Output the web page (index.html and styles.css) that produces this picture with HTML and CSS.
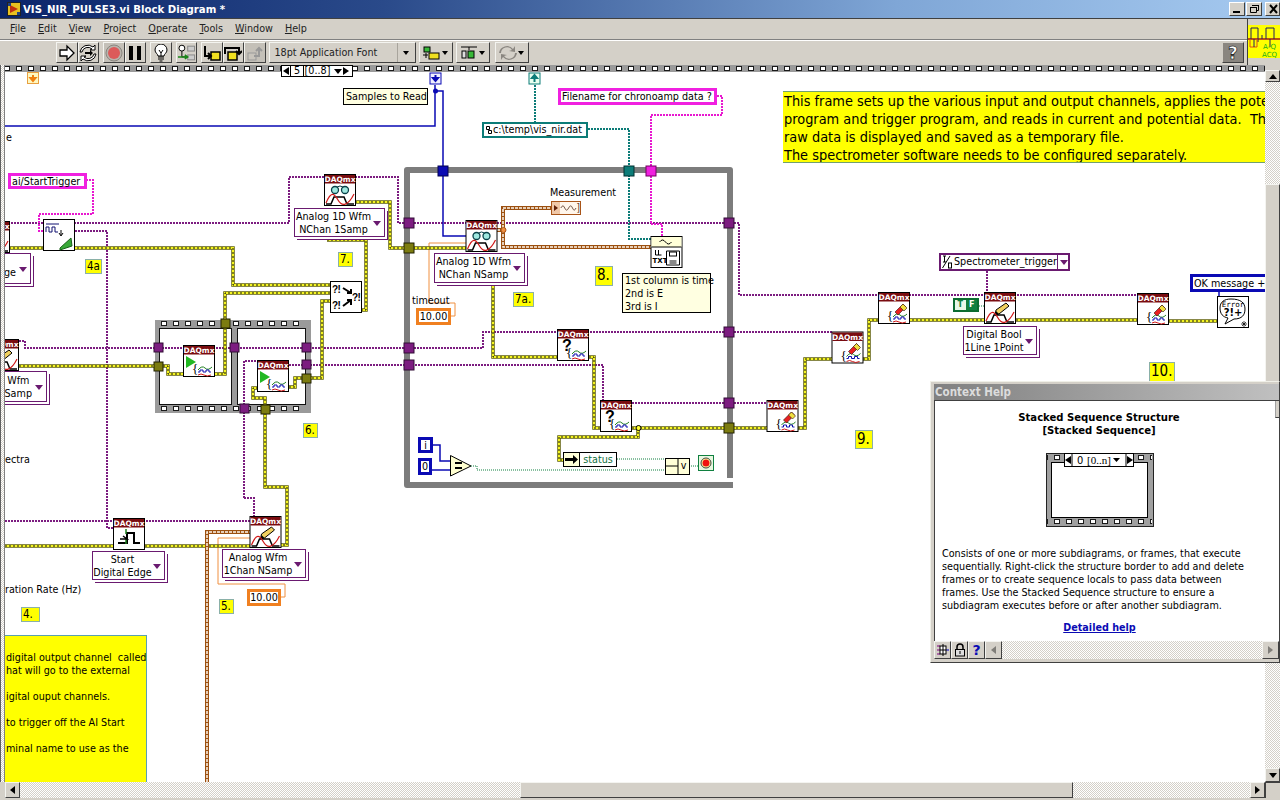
FILE: index.html
```html
<!DOCTYPE html>
<html lang="en">
<head>
<meta charset="utf-8">
<title>VIS_NIR_PULSE3.vi Block Diagram *</title>
<link rel="stylesheet" href="styles.css">
</head>
<body>
<div class="window">
  <header class="titlebar">
    <svg class="title-icon" width="14" height="14" viewBox="0 0 14 14"><rect width="14" height="14" fill="#222"/><rect x="1" y="1" width="12" height="12" fill="#e8c020"/><path d="M3 3l8 4-8 4z" fill="#c03010"/><path d="M1 1h3v3H1zM10 10h3v3h-3z" fill="#204080"/></svg>
    <span class="title-text">VIS_NIR_PULSE3.vi Block Diagram *</span>
    <div class="title-buttons">
      <span class="tbtn"><svg width="15" height="12"><rect x="3" y="8" width="7" height="2" fill="#000"/></svg></span>
      <span class="tbtn"><svg width="15" height="12"><path d="M5.5 2.5h6v5h-2M3.5 4.5h6v5h-6z" fill="none" stroke="#000"/><path d="M5 2h7v1H5zM3 4h7v1H3z" fill="#000"/></svg></span>
      <span class="tbtn tbtn-close"><svg width="15" height="12"><path d="M4 2l7 8M11 2l-7 8" stroke="#000" stroke-width="2"/></svg></span>
    </div>
  </header>

  <div class="chrome">
    <div class="chrome-main">
      <nav class="menubar">
        <span class="menu-item"><u>F</u>ile</span>
        <span class="menu-item"><u>E</u>dit</span>
        <span class="menu-item"><u>V</u>iew</span>
        <span class="menu-item"><u>P</u>roject</span>
        <span class="menu-item"><u>O</u>perate</span>
        <span class="menu-item"><u>T</u>ools</span>
        <span class="menu-item"><u>W</u>indow</span>
        <span class="menu-item"><u>H</u>elp</span>
      </nav>
      <div class="toolbar">
        <div class="tool-group group-run">
          <button class="tool"><svg width="18" height="18" viewBox="0 0 18 18"><path d="M2 6h7V2l7 7-7 7v-4H2z" fill="#fff" stroke="#000" stroke-width="1.3"/></svg></button>
          <button class="tool"><svg width="18" height="18" viewBox="0 0 18 18"><path d="M3 8a6 6 0 0 1 10-3l-2 1h5V1l-2 2A8 8 0 0 0 1 8zM15 10a6 6 0 0 1-10 3l2-1H2v5l2-2a8 8 0 0 0 13-5z" fill="#fff" stroke="#000"/><path d="M6 8h5V6l3 3-3 3v-2H6z" fill="#000"/></svg></button>
        </div>
        <div class="tool-group group-stop">
          <button class="tool tool-off"><svg width="18" height="18" viewBox="0 0 18 18"><circle cx="9" cy="9" r="8" fill="#b8b4ac" stroke="#8a8680"/><circle cx="9" cy="9" r="6" fill="#dc5a5a"/></svg></button>
          <button class="tool"><svg width="18" height="18" viewBox="0 0 18 18"><path d="M3 2h4v14H3zM11 2h4v14h-4z" fill="#000"/></svg></button>
        </div>
        <div class="tool-group group-bulb">
          <button class="tool"><svg width="16" height="18" viewBox="0 0 16 18"><path d="M5 12c0-2-3-3-3-6a6 6 0 0 1 12 0c0 3-3 4-3 6z" fill="#fff" stroke="#000"/><path d="M5 13h6M5 15h6M6.500 17h3M6 6l2 3 2-3M8 9v3" fill="none" stroke="#000"/></svg></button>
        </div>
        <div class="tool-group group-retain">
          <button class="tool"><svg width="20" height="18" viewBox="0 0 20 18"><circle cx="5" cy="4" r="3" fill="#fff" stroke="#000"/><rect x="11" y="2" width="7" height="5" fill="#ccc" stroke="#888"/><rect x="11" y="11" width="7" height="5" fill="#ccc" stroke="#888"/><path d="M5 7v6h6" fill="none" stroke="#000"/><path d="M1 13h9M8 11l3 2-3 2" fill="none" stroke="#188818" stroke-width="1.500"/></svg></button>
        </div>
        <div class="tool-group group-step">
          <button class="tool"><svg width="18" height="18" viewBox="0 0 18 18"><rect x="8" y="8" width="9" height="8" fill="#f0e020" stroke="#000" stroke-width="1.500"/><path d="M2 2v10h5M5 9l3 3-3 3" fill="none" stroke="#000" stroke-width="2"/></svg></button>
          <button class="tool"><svg width="18" height="18" viewBox="0 0 18 18"><rect x="4" y="8" width="9" height="8" fill="#f0e020" stroke="#000" stroke-width="1.500"/><path d="M1 10V4h14v5M12 7l3 3 3-3" fill="none" stroke="#000" stroke-width="2"/></svg></button>
          <button class="tool tool-off"><svg width="18" height="18" viewBox="0 0 18 18"><rect x="2" y="9" width="8" height="7" fill="#c8c4bc" stroke="#999"/><path d="M8 12h5V5M10 7l3-3 3 3" fill="none" stroke="#999" stroke-width="2"/></svg></button>
        </div>
        <div class="font-select">
          <span class="font-name">18pt Application Font</span>
          <span class="font-arrow"><i class="caret"></i></span>
        </div>
        <button class="drop drop-align"><svg width="18" height="16" viewBox="0 0 18 16"><rect x="1" y="2" width="6" height="5" fill="#38b838" stroke="#000"/><path d="M0 10h5M3 8v5" stroke="#000"/><rect x="6" y="8" width="10" height="6" fill="#f0e020" stroke="#000"/></svg><i class="caret"></i></button>
        <button class="drop drop-dist"><svg width="18" height="16" viewBox="0 0 18 16"><path d="M1 2h16" stroke="#000"/><rect x="2" y="6" width="4" height="7" fill="#ddd" stroke="#000"/><rect x="8" y="6" width="6" height="7" fill="#38b838" stroke="#000"/><path d="M9 2v3" stroke="#000"/></svg><i class="caret"></i></button>
        <button class="drop drop-order"><svg width="18" height="16" viewBox="0 0 18 16"><path d="M2 8a6 6 0 0 1 11-3l-3 1 6 1V1l-2 3A8 8 0 0 0 0 8zM16 8a6 6 0 0 1-11 3l3-1-6-1v6l2-3a8 8 0 0 0 14-4z" fill="#8a8680"/></svg><i class="caret"></i></button>
        <span class="toolbar-gap"></span>
        <button class="help-btn">?</button>
      </div>
    </div>
    <aside class="vi-icon">
      <svg width="32" height="33" viewBox="0 0 32 33"><rect width="32" height="33" fill="#ffff00"/><path d="M0 14h32" stroke="#a01818" stroke-width="1.500"/><path d="M3 14V3h7v11M10 14v3M14 14v-4M18 14V3h8v11M22 14v8" fill="none" stroke="#202060"/><path d="M2 14v8h7v-8" fill="none" stroke="#e05010"/><path d="M6 14v8" stroke="#202060"/><text class="vi-icon-text" x="15" y="24">A-Q</text><text class="vi-icon-text" x="14" y="32">ACQ</text></svg>
    </aside>
  </div>

  <main class="workspace">
    <div class="left-edge"></div>
    <div class="canvas">
      <div class="diagram">
        <svg class="wires" width="1280" height="800">
          <defs>
            <pattern id="film" patternUnits="userSpaceOnUse" width="12" height="8">
              <rect x="0.5" y="1.500" width="5" height="4" fill="#fff" stroke="#1a1a1a"/>
            </pattern>
            <g id="errs">
              <path d="M5 248H233V285H331"/>
              <path d="M213 374H225V293H331"/>
              <path d="M19 366H168V374H183"/>
              <path d="M327 240H366V310H362"/>
              <path d="M355 202H390V248H466"/>
              <path d="M265 409V398H253V388H257"/>
              <path d="M289 387H295V378H322V301H331"/>
              <path d="M265 409V487H287V545H281"/>
              <path d="M5 546H250"/>
              <path d="M493 284V357H557"/>
              <path d="M589 357H594V428H601"/>
              <path d="M632 428H767"/>
              <path d="M798 428H805V359H832"/>
              <path d="M863 359H869V320H1137"/>
              <path d="M1168 321H1217"/>
              <path d="M638 428V437H559V460H563"/>
            </g>
            <g id="brown">
              <path d="M497 230H503V208H551"/>
              <path d="M503 230V247H651"/>
              <path d="M207 782V532H250"/>
            </g>
            <g id="node">
              <rect x="0.500" y="0.500" width="31" height="31" fill="#fff" stroke="#000"/>
            </g>
            <g id="daq">
              <rect x="0.500" y="0.500" width="31" height="31" fill="#fff" stroke="#000"/>
              <rect x="1" y="1" width="30" height="8.500" fill="#7a0c10"/>
              <text class="daq-label" x="16" y="8">DAQmx</text>
            </g>
            <g id="pulse-wave">
              <path d="M2 30H7L10 23H20L23 30H30" fill="none" stroke="#000" stroke-width="1.500"/>
              <path d="M2 29C7 17 10 19 14 26S24 32 30 20" fill="none" stroke="#d01818" stroke-width="1.200"/>
            </g>
            <g id="brace-wave">
              <text class="brace" x="9" y="28">{</text>
              <path d="M15 25q4-5 7-2t7-1" fill="none" stroke="#208020"/>
              <path d="M15 27h2v-2h3v2h3v-2h3v2h2" fill="none" stroke="#1010b0"/>
              <path d="M15 30q3-2 6 0t7 0" fill="none" stroke="#d01818"/>
            </g>
            <g id="n-read">
              <use href="#daq"/>
              <circle cx="11" cy="16" r="3.500" fill="#9fe8e0" stroke="#084048" stroke-width="1.300"/>
              <circle cx="21" cy="16" r="3.500" fill="#9fe8e0" stroke="#084048" stroke-width="1.300"/>
              <path d="M13 13q3-2 6 0" fill="none" stroke="#084048"/>
              <use href="#pulse-wave"/>
            </g>
            <g id="n-start">
              <use href="#daq"/>
              <path d="M3 11L13 17 3 23z" fill="#22b822"/>
              <use href="#brace-wave"/>
            </g>
            <g id="n-query">
              <use href="#daq"/>
              <text class="query" x="5" y="22">?</text>
              <use href="#brace-wave"/>
            </g>
            <g id="n-clear">
              <use href="#daq"/>
              <use href="#brace-wave"/>
              <path d="M17 20L25 12l3 3-8 8z" fill="#e82020" stroke="#301010" stroke-width="0.600"/>
              <path d="M22 15L25 12l4 4-3 3z" fill="#f0e040" stroke="#301010" stroke-width="0.600"/>
            </g>
            <g id="n-write">
              <use href="#daq"/>
              <path d="M12 18L22 11l3 3-10 8-4 1z" fill="#f0d060" stroke="#000"/>
              <path d="M11 23l1-4 3 3z" fill="#000"/>
              <use href="#pulse-wave"/>
            </g>
          </defs>

          <!-- canvas-wide film strip -->
          <rect class="film-band" x="0" y="65" width="1280" height="7"/>
          <rect transform="translate(16,65)" x="-16" width="1280" height="7" fill="url(#film)"/>

          <!-- flat sequence -->
          <rect class="film-band" x="155" y="320" width="156" height="93"/>
          <rect transform="translate(161,320)" x="-6" width="150" height="8" fill="url(#film)"/>
          <rect transform="translate(161,405)" x="-6" width="150" height="8" fill="url(#film)"/>
          <rect class="frame-inner" x="159.500" y="328.500" width="72" height="76"/>
          <rect class="frame-inner" x="237.500" y="328.500" width="68" height="76"/>

          <!-- while loop -->
          <path class="loop" d="M730 478V170H407V485H733"/>

          <!-- thin data wires -->
          <g class="w-task">
            <path d="M5 223H289V177H324"/>
            <path d="M355 177H398V223H466"/>
            <path d="M497 223H739V295H879"/>
            <path d="M75 231H107V528H113"/>
            <path d="M19 341H25V348H483V332H832"/>
            <path d="M244 498V361H257"/>
            <path d="M244 498H254V516"/>
            <path d="M289 365H603V400"/>
            <path d="M632 403H766"/>
            <path d="M5 521H250"/>
            <path d="M909 295H1137"/>
            <path d="M987 271V292"/>
          </g>
          <g class="w-blue">
            <path d="M435 85V126H5"/>
            <path d="M435 91H443V236H466"/>
            <path d="M433 445H440V461H450"/>
            <path d="M431 470H450"/>
            <path d="M1219 291V296"/>
          </g>
          <circle class="dot-blue" cx="435.500" cy="91" r="2.500"/>
          <g class="w-teal">
            <path d="M535 85V122"/>
            <path d="M588 129H629V239H651"/>
          </g>
          <g class="w-pink">
            <path d="M717 96H722V115H651V224H662V236"/>
            <path d="M86 180H93V214H39V231H43"/>
          </g>
          <g class="w-orange">
            <path d="M451 316H455V303H429V243H466"/>
            <path d="M281 597H285V584H218V538H250"/>
          </g>
          <g class="w-bool">
            <path d="M617 459H665"/>
            <path d="M471 466H477V470H665"/>
            <path d="M689 466H698"/>
            <path d="M979 306H984"/>
          </g>

          <use href="#errs" class="err-a"/>
          <use href="#errs" class="err-b"/>
          <use href="#errs" class="err-c"/>
          <use href="#brown" class="brown-a"/>
          <use href="#brown" class="brown-b"/>
          <circle class="junction" cx="638.500" cy="428" r="2.500"/>
          <circle class="junction-o" cx="503.500" cy="230" r="2.500"/>

          <!-- tunnels -->
          <g class="t-purple">
            <rect x="404" y="218" width="10" height="10"/><rect x="404" y="343" width="10" height="10"/><rect x="404" y="360" width="10" height="10"/>
            <rect x="724" y="218" width="10" height="10"/><rect x="724" y="327" width="10" height="10"/><rect x="724" y="398" width="10" height="10"/>
            <rect x="154" y="343" width="9" height="9"/><rect x="230" y="343" width="9" height="9"/><rect x="302" y="343" width="9" height="9"/>
            <rect x="302" y="360" width="9" height="9"/><rect x="240" y="404" width="9" height="9"/>
          </g>
          <g class="t-olive">
            <rect x="404" y="243" width="10" height="10"/><rect x="724" y="423" width="10" height="10"/>
            <rect x="221" y="319" width="9" height="9"/><rect x="154" y="362" width="9" height="9"/>
            <rect x="302" y="374" width="9" height="9"/><rect x="261" y="405" width="9" height="9"/>
          </g>
          <rect class="t-blue" x="438" y="166" width="10" height="10"/>
          <rect class="t-teal" x="624" y="166" width="10" height="10"/>
          <rect class="t-pink" x="646" y="166" width="10" height="10"/>

          <!-- shift-style terminals at the top -->
          <g class="seq-local-o"><rect x="27.500" y="72.500" width="11" height="11"/><path d="M33 75v4M30.500 78l2.500 3 2.500-3z"/></g>
          <g class="seq-local-b"><rect x="430" y="73" width="11" height="11"/><path d="M435.500 75v4M433 78l2.500 3 2.500-3z"/></g>
          <g class="seq-local-t"><rect x="529" y="73" width="11" height="11"/><path d="M534.500 82v-4M532 78l2.500-3 2.500 3z"/></g>

          <!-- DAQmx nodes -->
          <use href="#n-read" x="324" y="174"/>
          <use href="#n-read" x="465.500" y="220"/>
          <use href="#n-start" x="183" y="345"/>
          <use href="#n-start" x="257" y="360"/>
          <use href="#n-query" x="557" y="329"/>
          <use href="#n-query" x="600" y="400"/>
          <use href="#n-clear" x="766.500" y="400"/>
          <use href="#n-clear" x="831.500" y="331.500"/>
          <use href="#n-clear" x="878" y="292"/>
          <use href="#n-clear" x="1137" y="293"/>
          <use href="#n-write" x="984" y="292"/>
          <use href="#n-write" x="249.500" y="516"/>
          <use href="#n-read" x="-22" y="221"/>
          <use href="#n-write" x="-13" y="339"/>

          <!-- trigger digital edge -->
          <g transform="translate(113,518)">
            <use href="#daq"/>
            <path d="M5 25h9V15h7v10h6" fill="none" stroke="#000" stroke-width="2"/>
            <path d="M13 11v5M13 21v5" stroke="#208020" stroke-width="1.500"/>
            <path d="M7 21h7l-4-3" fill="none" stroke="#000" stroke-width="1.500"/>
          </g>

          <!-- export signal -->
          <g transform="translate(43,219)">
            <use href="#node"/>
            <path d="M3 13v-5h3v5h3v-5h3v5h3" fill="none" stroke="#101070"/>
            <path d="M3 5h13" stroke="#101070"/>
            <path d="M18 11v5M16 14l2 3 2-3" fill="none" stroke="#000"/>
            <path d="M17 29L28 19l1 8-12 4z" fill="#38a838" stroke="#186018"/>
          </g>

          <!-- merge errors -->
          <g transform="translate(330,281)">
            <use href="#node"/>
            <text class="merge" x="2" y="12">?!</text>
            <text class="merge" x="2" y="28">?!</text>
            <text class="merge" x="22" y="20">?!</text>
            <path d="M13 7l8 5M21 8v4h-4M13 25l8-6M21 24v-5h-4" fill="none" stroke="#000" stroke-width="2"/>
          </g>

          <!-- write to text file -->
          <g transform="translate(650.500,236)">
            <rect x="0.500" y="0.500" width="31" height="31" fill="#fff" stroke="#000"/>
            <rect x="1" y="1" width="30" height="10" fill="#ffffd8"/>
            <path d="M1 11h30" stroke="#000"/>
            <path d="M9 6q3-4 6 0t6 0" fill="none" stroke="#000"/>
            <text class="txt" x="2" y="27">TXT</text>
            <path d="M5 14v5h6M8 14v5" fill="none" stroke="#000"/>
            <path d="M16 15h13v14H16z" fill="#fff" stroke="#000"/>
            <rect x="19" y="16" width="7" height="4" fill="#fff" stroke="#000"/>
            <rect x="19" y="24" width="7" height="5" fill="#888"/>
          </g>

          <!-- simple error handler -->
          <g transform="translate(1217,296)">
            <use href="#node"/>
            <path d="M14 3c-7 0-11 3-11 9 0 6 3 9 8 10l-3 6 9-5c8 0 11-4 11-10 0-6-4-10-14-10z" fill="#fff" stroke="#000"/>
            <text class="err-word" x="16" y="11">Error</text>
            <text class="err-sym" x="16" y="20">?!+</text>
            <path d="M25 26l4 4M29 26l-4 4M24 28h6M27 25v6" stroke="#000" stroke-width="0.700"/>
          </g>

          <!-- stop machinery -->
          <path class="cmp" d="M450.500 455.500L471 466 450.500 476z"/>
          <path class="cmp-eq" d="M455 463h7M455 468h7"/>
          <rect class="stop-box" x="698.500" y="455.500" width="15" height="15"/>
          <circle class="stop-ring" cx="706" cy="463" r="5"/>
          <circle class="stop-led" cx="706" cy="463" r="3.500"/>
          <rect class="or-box" x="665.500" y="458.500" width="24" height="16"/>
          <path class="or-line" d="M666 466h12M678 459v15"/>
        </svg>

        <div class="label lbl-e">e</div>
        <div class="label lbl-ectra">ectra</div>
        <div class="label lbl-rate">ration Rate (Hz)</div>
        <div class="label lbl-measure">Measurement</div>
        <div class="label lbl-timeout">timeout</div>

        <div class="selector">
          <i class="sel-l"></i><span class="sel-num">5</span><span class="sel-range">[0..8]</span><i class="sel-down"></i><i class="sel-r"></i>
        </div>

        <div class="tip tip-samples">Samples to Read</div>
        <div class="tip tip-cols">1st column is time<br>2nd is E<br>3rd is I</div>

        <div class="tag tag-4a">4a</div>
        <div class="tag tag-7">7.</div>
        <div class="tag tag-6">6.</div>
        <div class="tag tag-7a">7a.</div>
        <div class="tag tag-big tag-8">8.</div>
        <div class="tag tag-big tag-9">9.</div>
        <div class="tag tag-big tag-10">10.</div>
        <div class="tag tag-5">5.</div>
        <div class="tag tag-4">4.</div>

        <div class="const c-pink c-trigger">ai/StartTrigger</div>
        <div class="const c-pink c-filename">Filename for chronoamp data ?</div>
        <div class="const c-teal c-path"><svg class="path-glyph" width="8" height="11"><path d="M1.500 1.500h3v3h-3zM3.500 5.500h3v3h-3z" fill="none" stroke="#000"/></svg>c:\temp\vis_nir.dat</div>
        <div class="const c-num c-t1">10.00</div>
        <div class="const c-num c-t2">10.00</div>
        <div class="const c-blue c-ok">OK message +</div>
        <div class="const c-blue c-i">i</div>
        <div class="const c-blue c-zero">0</div>
        <div class="const c-purple c-spec"><svg class="io-glyph" width="11" height="14" viewBox="0 0 11 14"><path d="M0.500 13L8 1" stroke="#000"/><path d="M1 1h3M2.500 1v6M1 7h3" fill="none" stroke="#000"/><rect x="6.500" y="8" width="3" height="5" fill="none" stroke="#000"/></svg><span class="spec-name">Spectrometer_trigger</span><span class="spec-drop"><i class="spec-tri"></i></span></div>
        <div class="bool-const"><span class="bool-t">T</span><span class="bool-f">F</span></div>

        <div class="indicator"><i class="ind-left"><i class="ind-tri"></i></i><svg width="20" height="12" viewBox="0 0 20 12"><path d="M1 6q2.500-5 4.500 0t4.500 0 4.500 0 4 0" fill="none" stroke="#604030"/></svg><span class="ind-end">]</span></div>
        <div class="unbundle"><span class="unb-arrow"><svg width="16" height="13"><path d="M1 5h8V2l5 4.500-5 4.500V8H1z" fill="#000"/></svg></span><span class="unb-name">status</span></div>
        <div class="or-v">v</div>

        <div class="poly p-read1"><span>Analog 1D Wfm<br>NChan 1Samp</span></div>
        <div class="poly p-read2"><span>Analog 1D Wfm<br>NChan NSamp</span></div>
        <div class="poly p-start"><span>Start<br>Digital Edge</span></div>
        <div class="poly p-write1"><span>Analog Wfm<br>1Chan NSamp</span></div>
        <div class="poly p-bool"><span>Digital Bool<br>1Line 1Point</span></div>
        <div class="poly p-left1"><span>ge</span></div>
        <div class="poly p-left2"><span>Wfm<br>Samp</span></div>

        <div class="note note-main">This frame sets up the various input and output channels, applies the pote<br>program and trigger program, and reads in current and potential data.&nbsp; Th<br>raw data is displayed and saved as a temporary file.<br>The spectrometer software needs to be configured separately.</div>
        <div class="note note-left">
          <p class="nl1">digital output channel&nbsp; called</p>
          <p>hat will go to the external</p>
          <p class="gap">igital ouput channels.</p>
          <p class="gap nl4">to trigger off the AI Start</p>
          <p class="gap nl5">minal name to use as the</p>
        </div>
      </div>
    </div>
    <div class="vscroll">
      <button class="sb-btn"><i class="arrow-up"></i></button>
      <div class="sb-track sb-top"></div>
      <div class="sb-thumb"></div>
      <div class="sb-track sb-fill"></div>
      <button class="sb-btn"><i class="arrow-down"></i></button>
    </div>
  </main>

  <footer class="hscroll">
    <div class="hs-left"><button class="sb-btn hs-btn"><i class="arrow-left"></i></button></div>
    <div class="sb-track hs-a"></div>
    <div class="hs-thumb"></div>
    <div class="sb-track hs-b"></div>
    <button class="sb-btn hs-btn"><i class="arrow-right"></i></button>
    <div class="corner"></div>
  </footer>

  <section class="help">
    <div class="help-title">Context Help</div>
    <div class="help-body">
      <h2 class="help-heading">Stacked Sequence Structure<br>[Stacked Sequence]</h2>
      <svg class="help-figure" width="108" height="74" viewBox="0 0 108 74">
        <rect x="0.500" y="0.500" width="107" height="73" fill="#a0a0a0" stroke="#222"/>
        <rect transform="translate(8,1)" x="-7" width="105" height="8" fill="url(#film)"/>
        <rect transform="translate(8,65)" x="-7" width="105" height="8" fill="url(#film)"/>
        <rect x="5.500" y="9.500" width="96" height="55" fill="#fff" stroke="#000"/>
        <rect x="18.500" y="0.500" width="69" height="13" fill="#fff" stroke="#000"/>
        <path d="M26 1v13M80 1v13" stroke="#000"/>
        <path d="M19 7l6-4v8zM87 7l-6-4v8zM67 5h7l-3.500 4z" fill="#000"/>
        <text class="help-sel" x="31" y="11">0</text>
        <text class="help-sel help-sel-r" x="41" y="11">[0..n]</text>
      </svg>
      <p class="help-text">Consists of one or more subdiagrams, or frames, that execute<br>sequentially. Right-click the structure border to add and delete<br>frames or to create sequence locals to pass data between<br>frames. Use the Stacked Sequence structure to ensure a<br>subdiagram executes before or after another subdiagram.</p>
      <a class="help-link" href="#">Detailed help</a>
      <div class="help-vbar"></div>
    </div>
    <div class="help-bottom">
      <span class="hb-btn"><svg width="14" height="14" viewBox="0 0 14 14"><path d="M1 7h3M1 3h3M1 11h3" stroke="#800080"/><path d="M10 7h3" stroke="#0000c0"/><rect x="4" y="3" width="6" height="8" fill="#fff" stroke="#000"/><path d="M7 1v12M4 7h6" stroke="#000"/></svg></span>
      <span class="hb-btn"><svg width="12" height="14" viewBox="0 0 12 14"><path d="M3 7V4a3 3 0 0 1 6 0v3" fill="none" stroke="#000" stroke-width="1.500"/><rect x="1.500" y="6.500" width="9" height="6.500" fill="#ddd" stroke="#000"/><path d="M6 8v3" stroke="#000"/></svg></span>
      <span class="hb-btn hb-q">?</span>
      <span class="hb-btn hb-arrow"><i class="arrow-left arrow-dim"></i></span>
      <span class="hb-track"></span>
      <span class="hb-btn hb-arrow"><i class="arrow-right arrow-dim"></i></span>
    </div>
  </section>
</div>
</body>
</html>
```

FILE: styles.css
```css
* { box-sizing: border-box; }
html, body { margin: 0; padding: 0; }
body { width: 1280px; height: 800px; overflow: hidden; background: #d4d0c8; }
button { font: inherit; padding: 0; margin: 0; }
p, h2 { margin: 0; }
i { display: block; }

.window {
  position: relative; width: 1280px; height: 800px; overflow: hidden;
  display: flex; flex-direction: column; background: #d4d0c8;
  font-family: "DejaVu Sans Condensed", "DejaVu Sans", sans-serif; font-stretch: condensed; font-size: 10.700px; color: #000;
}

/* title bar */
.titlebar {
  height: 19px; flex: none; display: flex; align-items: center; padding: 0 0 0 7px;
  background: linear-gradient(90deg, #0a246a 0, #2a4a8a 30%, #7fa6d6 70%, #a6caf0 100%);
  border-bottom: 1px solid #404040;
}
.title-icon { flex: none; margin-right: 2px; }
.title-text { color: #fff; font-weight: 700; font-size: 11.300px; white-space: nowrap; }
.title-buttons { margin-left: auto; display: flex; gap: 1px; }
.tbtn {
  width: 16px; height: 14px; display: flex; background: #d4d0c8;
  border: 1px solid; border-color: #fff #404040 #404040 #fff;
}
.tbtn-close { margin-left: 2px; width: 15px; }

/* menu + toolbar */
.chrome { height: 46px; flex: none; display: flex; }
.chrome-main { flex: 1; display: flex; flex-direction: column; }
.menubar {
  height: 21px; display: flex; align-items: center; padding-left: 10px; gap: 12px;
  border-bottom: 1px solid #808080; box-shadow: 0 1px 0 #fff;
}
.menu-item { color: #222; line-height: 14px; }
.toolbar { flex: 1; display: flex; align-items: flex-start; padding: 2px 3px 0 56px; }
.tool-group { display: flex; }
.group-stop { margin-left: 4px; }
.group-bulb { margin-left: 4px; }
.group-retain { margin-left: 4px; }
.group-step { margin-left: 4px; }
.tool {
  width: 21.500px; height: 21px; display: flex; align-items: center; justify-content: center;
  background: #d4d0c8; border: 1px solid; border-color: #f4f4f0 #404040 #404040 #f4f4f0;
}
.tool-off { background: #c4c0b8; }
.font-select {
  margin-left: 3px; width: 147px; height: 21px; display: flex; align-items: center;
  border: 1px solid; border-color: #f4f4f0 #404040 #404040 #f4f4f0; background: #d4d0c8;
}
.font-name { flex: 1; padding-left: 5px; white-space: nowrap; color: #222; }
.font-arrow { width: 18px; height: 19px; display: flex; align-items: center; justify-content: center; border-left: 1px solid #a8a49c; }
.caret { width: 0; height: 0; border: 3.500px solid transparent; border-top: 4px solid #000; border-bottom: 0; }
.drop {
  width: 34px; height: 21px; margin-left: 3px; display: flex; align-items: center; justify-content: center; gap: 1px;
  background: #d4d0c8; border: 1px solid; border-color: #f4f4f0 #404040 #404040 #f4f4f0;
}
.drop-order { margin-left: 5px; }
.toolbar-gap { flex: 1; }
.help-btn {
  width: 22px; height: 21px; display: flex; align-items: center; justify-content: center;
  background: #8a8680; border: 1px solid; border-color: #d4d0c8 #404040 #404040 #d4d0c8;
  color: #fff; font: 700 17px "DejaVu Sans", sans-serif; -webkit-text-stroke: 0.6px #000;
}
.vi-icon {
  width: 33px; flex: none; border-left: 1px solid #404040; display: flex; align-items: flex-start; padding-top: 6px;
}
.vi-icon-text { fill: #18b018; font: 7px "DejaVu Sans", sans-serif; }

/* workspace */
.workspace { height: 717px; flex: none; display: flex; position: relative; }
.left-edge {
  width: 5px; flex: none; border-left: 1px solid #606060; border-right: 1px solid #808080;
  background: repeating-conic-gradient(#d4d0c8 0 25%, #fff 0 50%) 0 0 / 2px 2px;
}
.canvas { position: relative; width: 1260px; flex: none; background: #fff; overflow: hidden; }
.diagram { position: absolute; left: -5px; top: -65px; width: 1280px; height: 800px; }
.wires { position: absolute; left: 0; top: 0; }

/* scrollbars */
.vscroll { width: 15px; flex: none; display: flex; flex-direction: column; }
.sb-btn {
  width: 15px; height: 14px; flex: none; display: flex; align-items: center; justify-content: center;
  background: #d4d0c8; border: 1px solid; border-color: #f4f4f0 #404040 #404040 #f4f4f0;
}
.vscroll .sb-btn:first-child { margin-top: 5px; height: 12px; }
.sb-track { background: repeating-conic-gradient(#d4d0c8 0 25%, #fff 0 50%) 0 0 / 2px 2px; }
.sb-top { height: 102px; }
.sb-thumb { height: 200px; background: #d4d0c8; border: 1px solid; border-color: #f4f4f0 #404040 #404040 #f4f4f0; }
.sb-fill { flex: 1; }
.arrow-up { border: 4px solid transparent; border-bottom: 5px solid #000; border-top: 0; }
.arrow-down { border: 4px solid transparent; border-top: 5px solid #000; border-bottom: 0; }
.arrow-left { border: 4px solid transparent; border-right: 5px solid #000; border-left: 0; }
.arrow-right { border: 4px solid transparent; border-left: 5px solid #000; border-right: 0; }
.arrow-dim { opacity: 0.4; }

.hscroll { height: 16px; flex: none; display: flex; }
.hs-left { width: 20px; flex: none; padding-left: 5px; }
.hs-btn { height: 16px; }
.hs-a { width: 500px; flex: none; }
.hs-thumb { width: 553px; flex: none; background: #d4d0c8; border: 1px solid; border-color: #f4f4f0 #404040 #404040 #f4f4f0; }
.hs-b { flex: 1; }
.corner { width: 15px; flex: none; background: #d4d0c8; border-left: 1px solid #404040; border-top: 1px solid #404040; }

/* svg paint */
.film-band { fill: #9a9a9a; }
.frame-inner { fill: #fff; stroke: #111; }
.loop { fill: none; stroke: #7c7c7c; stroke-width: 6; stroke-linejoin: round; }
.w-task path { fill: none; stroke: #7c1c80; stroke-width: 2; stroke-dasharray: 2 1; }
.w-blue path { fill: none; stroke: #0a0ab4; stroke-width: 1.500; }
.dot-blue { fill: #0a0ab4; }
.w-teal path { fill: none; stroke: #0c7c78; stroke-width: 2; stroke-dasharray: 2 1; }
.w-pink path { fill: none; stroke: #e818d0; stroke-width: 2; stroke-dasharray: 2 1; }
.w-orange path { fill: none; stroke: #f09040; stroke-width: 1; }
.w-bool path { fill: none; stroke: #108040; stroke-width: 1; stroke-dasharray: 1 1; }
.err-a { fill: none; stroke: #60600a; stroke-width: 3.500; }
.err-b { fill: none; stroke: #f4f420; stroke-width: 2; }
.err-c { fill: none; stroke: #101010; stroke-width: 1; stroke-dasharray: 2 2; }
.brown-a { fill: none; stroke: #9c5010; stroke-width: 4; }
.brown-b { fill: none; stroke: #fff8ee; stroke-width: 1.500; stroke-dasharray: 3 1; }
.junction { fill: #ffff30; stroke: #000; }
.junction-o { fill: #f09040; stroke: #a85418; }
.t-purple rect { fill: #7c1c80; stroke: #300c34; }
.t-olive rect { fill: #7c7c10; stroke: #202000; }
.t-blue { fill: #0a0ab4; stroke: #000050; }
.t-teal { fill: #0c7c78; stroke: #003030; }
.t-pink { fill: #f020e0; stroke: #700060; }
.seq-local-o rect { fill: #fff8c0; stroke: #e8a040; }
.seq-local-o path { fill: #f08010; stroke: #f08010; stroke-width: 2; }
.seq-local-b rect { fill: #f0f0ff; stroke: #0a0ab4; }
.seq-local-b path { fill: #0a0ab4; stroke: #0a0ab4; stroke-width: 2; }
.seq-local-t rect { fill: #e8fff0; stroke: #0c7c78; }
.seq-local-t path { fill: #0c7c78; stroke: #0c7c78; stroke-width: 2; }
.daq-label { fill: #fff; font: 700 7.500px "DejaVu Sans", sans-serif; text-anchor: middle; }
.brace { font: 13px "Liberation Serif", serif; fill: #000; }
.query { font: 700 16px "Liberation Sans", sans-serif; fill: #000; }
.merge { font: 900 10px "Liberation Sans", sans-serif; fill: #000; letter-spacing: -0.5px; }
.txt { font: 700 7px "DejaVu Sans", sans-serif; fill: #000; }
.err-word { font: 7.500px "DejaVu Sans Mono", monospace; text-anchor: middle; fill: #000; }
.err-sym { font: 700 10px "DejaVu Sans", sans-serif; text-anchor: middle; fill: #000; }
.cmp { fill: #ffffd0; stroke: #000; }
.cmp-eq { stroke: #000; stroke-width: 2; }
.stop-box { fill: #e8f8e0; stroke: #108040; }
.stop-ring { fill: #ffffa0; stroke: #404040; }
.stop-led { fill: #f01010; }
.or-box { fill: #ffffd8; stroke: #000; }
.or-line { fill: none; stroke: #000; }
.or-v { position: absolute; left: 678px; top: 458px; width: 11px; height: 16px; text-align: center; line-height: 16px; }

/* free-floating diagram labels */
.label { position: absolute; white-space: nowrap; line-height: 14px; }
.lbl-e { left: 6px; top: 131px; }
.lbl-ectra { left: 5px; top: 453px; }
.lbl-rate { left: 5px; top: 583px; }
.lbl-measure { left: 550px; top: 186px; }
.lbl-timeout { left: 412px; top: 294px; }

.selector {
  position: absolute; left: 281px; top: 65px; width: 72px; height: 12px;
  display: flex; align-items: center; background: #fff; border: 1px solid #000; line-height: 10px;
}
.sel-l { width: 0; height: 0; margin: 0 1px 0 1px; border: 4px solid transparent; border-right: 6px solid #000; border-left: 0; flex: none; }
.sel-r { width: 0; height: 0; margin: 0 0 0 1px; border: 4px solid transparent; border-left: 6px solid #000; border-right: 0; flex: none; }
.sel-down { width: 0; height: 0; margin-left: 3px; border: 4px solid transparent; border-top: 5px solid #000; border-bottom: 0; flex: none; }
.sel-num { width: 14px; flex: none; text-align: center; border-left: 1px solid #000; border-right: 1px solid #000; height: 10px; }
.sel-range { width: 27px; flex: none; text-align: center; }

.tip { position: absolute; background: #ffffe1; border: 1px solid #000; white-space: nowrap; padding: 0 2px; line-height: 13px; }
.tip-samples { left: 343px; top: 88px; width: 85px; height: 17px; line-height: 15px; }
.tip-cols { left: 622px; top: 273px; width: 89px; height: 40px; }

.tag { position: absolute; background: #ffff00; border: 1px solid #8ab0a8; font-size: 11.500px; line-height: 13px; padding-left: 1px; white-space: nowrap; }
.tag-big { font-size: 15px; line-height: 17px; }
.tag-4a { left: 85px; top: 259px; width: 17px; height: 15px; }
.tag-7 { left: 338px; top: 252px; width: 15px; height: 15px; }
.tag-6 { left: 303px; top: 423px; width: 15px; height: 15px; }
.tag-7a { left: 513px; top: 292px; width: 21px; height: 15px; }
.tag-8 { left: 595px; top: 266px; width: 18px; height: 20px; }
.tag-9 { left: 855px; top: 430px; width: 18px; height: 19px; }
.tag-10 { left: 1149px; top: 362px; width: 26px; height: 22px; }
.tag-5 { left: 219px; top: 599px; width: 15px; height: 15px; }
.tag-4 { left: 21px; top: 607px; width: 19px; height: 15px; }

.const { position: absolute; background: #fff; white-space: nowrap; display: flex; align-items: center; }
.c-pink { border: 3px solid #f020e0; padding-left: 1px; line-height: 11px; }
.c-trigger { left: 8px; top: 173px; width: 79px; height: 16px; }
.c-filename { left: 558px; top: 88px; width: 159px; height: 17px; }
.c-teal { border: 2px solid #0c7c78; line-height: 12px; }
.c-path { left: 482px; top: 122px; width: 106px; height: 16px; padding-left: 1px; }
.path-glyph { flex: none; }
.c-num { border: 3px solid #f08020; justify-content: center; line-height: 11px; }
.c-t1 { left: 416px; top: 308px; width: 35px; height: 17px; }
.c-t2 { left: 247px; top: 589px; width: 34px; height: 17px; }
.c-blue { border: 3px solid #0a0ab4; line-height: 11px; }
.c-ok { left: 1190px; top: 274px; width: 90px; height: 18px; padding-left: 1px; }
.c-i { left: 418px; top: 437px; width: 15px; height: 16px; justify-content: center; }
.c-zero { left: 418px; top: 458px; width: 14px; height: 17px; justify-content: center; }
.c-purple { border: 2px solid #6a1a70; }
.c-spec { left: 939px; top: 253px; width: 131px; height: 18px; line-height: 12px; }
.io-glyph { margin: 0 1px; flex: none; }
.spec-name { flex: 1; }
.spec-drop { width: 14px; height: 14px; flex: none; border-left: 1px solid #6a1a70; display: flex; align-items: center; justify-content: center; }
.spec-tri { width: 0; height: 0; border: 4px solid transparent; border-top: 5px solid #6a1a70; border-bottom: 0; }
.bool-const { position: absolute; left: 953px; top: 298px; width: 26px; height: 14px; background: #108040; border: 2px solid #0c6c30; display: flex; align-items: center; font: 700 8px "DejaVu Sans", sans-serif; }
.bool-t { width: 11px; text-align: center; background: #e8f8e8; color: #108040; line-height: 10px; }
.bool-f { width: 11px; margin-left: 1px; text-align: center; background: #108040; color: #fff; line-height: 10px; }

.indicator { position: absolute; left: 551px; top: 201px; width: 30px; height: 14px; background: #fff6ec; border: 1px solid #a85418; display: flex; align-items: center; overflow: hidden; line-height: 10px; color: #604030; }
.ind-left { width: 8px; height: 12px; flex: none; background: #f0c8a8; display: flex; align-items: center; justify-content: center; }
.ind-tri { width: 0; height: 0; border: 3px solid transparent; border-left: 4px solid #602008; border-right: 0; }
.ind-end { margin-left: -1px; }

.unbundle { position: absolute; left: 563px; top: 452px; width: 54px; height: 15px; display: flex; background: #ffffd8; border: 1px solid #000; }
.unb-arrow { width: 16px; flex: none; border-right: 1px solid #000; display: flex; align-items: center; }
.unb-name { flex: 1; background: #fff; color: #107040; line-height: 13px; text-align: center; }

.poly {
  position: absolute; background: #fff; border: 1px solid #6a1a70; display: flex; align-items: center; justify-content: center;
  box-shadow: 2px 2px 0 0 #fff, 3px 3px 0 0 #6a1a70; text-align: center; line-height: 13px; white-space: nowrap; padding-right: 12px;
}
.poly::after {
  content: ""; position: absolute; right: 3px; top: 50%; margin-top: -2px;
  border: 4px solid transparent; border-top: 5px solid #6a1a70; border-bottom: 0;
}
.p-read1 { left: 294px; top: 208px; width: 91px; height: 29px; }
.p-read2 { left: 434px; top: 253px; width: 91px; height: 30px; }
.p-start { left: 92px; top: 551px; width: 73px; height: 29px; }
.p-write1 { left: 222px; top: 549px; width: 84px; height: 29px; }
.p-bool { left: 963px; top: 326px; width: 74px; height: 29px; }
.p-left1 { left: -30px; top: 253px; width: 61px; height: 31px; justify-content: flex-end; padding-right: 14px; padding-top: 8px; }
.p-left2 { left: -30px; top: 371px; width: 77px; height: 31px; justify-content: flex-end; padding-right: 14px; }

.note { position: absolute; background: #ffff00; white-space: nowrap; overflow: hidden; }
.note-main {
  left: 783px; top: 91px; width: 500px; height: 72px; padding-left: 1px;
  border-top: 1px solid #70a070; border-bottom: 1px solid #70a070; font-size: 14.400px; line-height: 18px;
}
.note-left {
  left: -10px; top: 635px; width: 157px; height: 160px; padding: 15px 0 0 15px;
  border: 1px solid #5aa0b0; line-height: 13px;
}
.note-left .gap { margin-top: 13px; }

/* context help window */
.help {
  position: absolute; left: 930px; top: 381px; width: 350px; height: 282px; overflow: hidden;
  background: #d4d0c8; border: 1px solid; border-color: #f0f0e8 #404040 #404040 #f0f0e8;
  padding: 2px 0 3px 3px; display: flex; flex-direction: column;
}
.help-title {
  height: 16px; flex: none; padding-left: 1px;
  background: linear-gradient(90deg, #808080, #c0c0c0); color: #dcdcdc;
  font-weight: 700; font-size: 11.500px; line-height: 16px;
}
.help-body {
  flex: 1; position: relative; background: #fff; border-left: 1px solid #404040; border-top: 1px solid #404040;
  display: flex; flex-direction: column; align-items: center;
}
.help-heading { font-weight: 700; font-size: 11.200px; line-height: 13px; text-align: center; width: 334px; padding-top: 10px; margin-left: -16px; }
.help-figure { margin: 16px 0 0 -15px; flex: none; }
.help-sel { font-size: 11px; fill: #000; }
.help-sel-r { font-family: "Liberation Serif", serif; }
.help-text { align-self: flex-start; padding-left: 7px; margin-top: 20px; line-height: 13px; white-space: nowrap; }
.help-link { margin: 9px 0 0 -15px; color: #0a0ab4; font-weight: 700; line-height: 14px; text-decoration: underline; }
.help-vbar { position: absolute; right: 0; top: 0; width: 4px; height: 17px; background: #d4d0c8; border-left: 1px solid #a0a0a0; border-bottom: 1px solid #404040; }
.help-bottom { height: 18px; flex: none; display: flex; }
.hb-btn {
  width: 17px; height: 18px; flex: none; display: flex; align-items: center; justify-content: center;
  background: #d4d0c8; border: 1px solid; border-color: #f4f4f0 #404040 #404040 #f4f4f0;
}
.hb-q { color: #0a0ab4; font: 700 14px "DejaVu Sans", sans-serif; }
.hb-track { flex: 1; background: repeating-conic-gradient(#d4d0c8 0 25%, #fff 0 50%) 0 0 / 2px 2px; }
```
